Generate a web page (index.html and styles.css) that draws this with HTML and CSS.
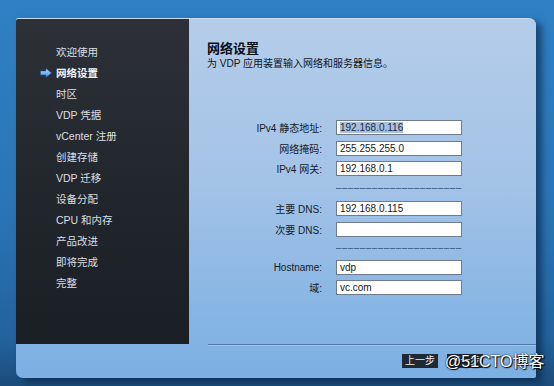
FILE: index.html
```html
<!DOCTYPE html>
<html lang="zh-CN">
<head>
    <meta charset="UTF-8">
    <title>VDP 网络设置</title>
    <link rel="stylesheet" href="styles.css">
</head>
<body>
    <div class="window">

        <!-- Wizard steps -->
        <ul class="steps">
            <li>欢迎使用</li>
            <li class="current">
                <svg class="arrow" width="12" height="10" viewBox="0 0 12 10">
                    <defs>
                        <linearGradient id="ag" x1="0" y1="0" x2="0" y2="1">
                            <stop offset="0" stop-color="#cfe6ff"/>
                            <stop offset="1" stop-color="#2f86dc"/>
                        </linearGradient>
                    </defs>
                    <path d="M0.5 3 H6 V0.5 L11.5 5 L6 9.5 V7 H0.5 Z" fill="url(#ag)" stroke="#1d5fa8" stroke-width="0.6"/>
                </svg>
                网络设置
            </li>
            <li>时区</li>
            <li>VDP 凭据</li>
            <li>vCenter 注册</li>
            <li>创建存储</li>
            <li>VDP 迁移</li>
            <li>设备分配</li>
            <li>CPU 和内存</li>
            <li>产品改进</li>
            <li>即将完成</li>
            <li>完整</li>
        </ul>

        <!-- Network form -->
        <div class="main">
            <h1>网络设置</h1>
            <p class="intro">为 VDP 应用装置输入网络和服务器信息。</p>

            <div class="form">
                <label>IPv4 静态地址:</label>
                <div class="field"><span class="sel">192.168.0.116</span></div>
                <label>网络掩码:</label>
                <div class="field">255.255.255.0</div>
                <label>IPv4 网关:</label>
                <div class="field">192.168.0.1</div>

                <div class="sep"></div>

                <label>主要 DNS:</label>
                <div class="field">192.168.0.115</div>
                <label>次要 DNS:</label>
                <div class="field"></div>

                <div class="sep short"></div>

                <label>Hostname:</label>
                <div class="field">vdp</div>
                <label>域:</label>
                <div class="field">vc.com</div>
            </div>
        </div>

        <!-- Buttons -->
        <div class="footer">
            <button>上一步</button>
            <button>下一步</button>
        </div>
    </div>

    <div class="watermark">@51CTO博客</div>
</body>
</html>
```

FILE: styles.css
```css
/* General */
body {
    margin: 0;
    width: 554px;
    height: 386px;
    overflow: hidden;
    padding: 18px 0 0 16px;
    box-sizing: border-box;
    font-family: "Liberation Sans", "Noto Sans CJK SC", sans-serif;
    background: linear-gradient(180deg, #2f80c4 0%, #2a74b5 55%, #22629d 88%, #1b4c7b 100%);
    position: relative;
}

/* Dialog */
.window {
    width: 520px;
    height: 360px;
    display: grid;
    grid-template-columns: 173px 1fr;
    grid-template-rows: 325px 1fr;
    background: linear-gradient(180deg, #b4cde9 0%, #a4c3e7 45%, #88b6e4 80%, #7cafe3 100%);
    border-top: 1px solid #c8dbef;
    border-radius: 2px 7px 2px 7px;
    box-shadow: 6px 4px 7px rgba(5, 25, 55, 0.55);
    box-sizing: border-box;
}

/* Steps sidebar */
.steps {
    list-style: none;
    margin: 0;
    padding: 23px 0 0 24px;
    background: linear-gradient(180deg, #2d3137 0%, #22272e 50%, #1a1f26 100%);
    border-top-left-radius: 2px;
}

.steps li {
    height: 21px;
    line-height: 21px;
    padding-left: 16px;
    font-size: 10.5px;
    color: #dcdfe3;
    position: relative;
}

.steps li.current {
    font-weight: bold;
    color: #f2f4f6;
}

.arrow {
    position: absolute;
    left: 0;
    top: 5px;
}

/* Main */
.main {
    padding: 22px 0 0 18px;
}

h1 {
    margin: 0;
    font-size: 13px;
    line-height: 16px;
    color: #0b0f16;
}

.intro {
    margin: 0;
    font-size: 10px;
    line-height: 14px;
    color: #10151d;
}

/* Form */
.form {
    margin-top: 49px;
    display: grid;
    grid-template-columns: 115px 126px;
    column-gap: 14px;
    row-gap: 5.5px;
    align-items: center;
}

.form label {
    text-align: right;
    font-size: 10px;
    color: #141c2a;
}

.field {
    height: 15px;
    line-height: 13px;
    border: 1px solid #6f7b8c;
    background: #fff;
    box-sizing: border-box;
    padding-left: 3px;
    font-size: 10px;
    color: #161616;
}

.sel {
    background: #a8c0dd;
    color: #1c2a44;
}

.sep {
    grid-column: 2;
    height: 14px;
    background: repeating-linear-gradient(90deg, #4a6a92 0 5px, #7f9cc0 5px 6px) center / 100% 1px no-repeat;
}

.sep.short {
    height: 12px;
}

/* Footer */
.footer {
    grid-column: 2;
    margin-left: 19px;
    border-top: 1px solid #4f7aa8;
    box-shadow: inset 0 1px 0 #9cc3ec;
    display: flex;
    justify-content: flex-end;
    align-items: flex-start;
    gap: 9px;
    padding: 9px 53px 0 0;
}

button {
    height: 14px;
    padding: 0 3px;
    border: none;
    background: #1f2934;
    color: #f0f0f0;
    font-family: "Liberation Sans", "Noto Sans CJK SC", sans-serif;
    font-size: 10px;
    line-height: 14px;
}

/* Watermark */
.watermark {
    position: absolute;
    left: 445px;
    top: 351px;
    font-size: 16px;
    line-height: 22px;
    color: #fff;
    text-shadow: 1px 1px 1px #000, 0 0 2px #000;
}
```
